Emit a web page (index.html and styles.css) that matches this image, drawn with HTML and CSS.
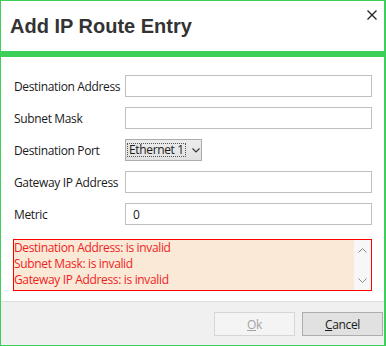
FILE: index.html
```html
<!DOCTYPE html>
<html lang="en">
<head>
    <meta charset="UTF-8">
    <meta name="viewport" content="width=device-width, initial-scale=1.0">
    <title>Add IP Route Entry</title>
    <link rel="stylesheet" href="styles.css">
</head>
<body>
  <div class="dialog">
      <div class="dialog-header">
          <h1>Add IP Route Entry</h1>
          <button class="close-btn" type="button" aria-label="Close">
              <svg width="10" height="10" viewBox="0 0 10 10">
                  <path d="M0.5 0.5 L9.5 9.5 M9.5 0.5 L0.5 9.5" stroke="#222" stroke-width="1.3" fill="none"/>
              </svg>
          </button>
      </div>
      <div class="accent-bar"></div>

      <form class="route-form" id="routeForm">
          <label for="destAddress">Destination Address</label>
          <input type="text" id="destAddress" class="field">

          <label for="subnetMask">Subnet Mask</label>
          <input type="text" id="subnetMask" class="field">

          <label>Destination Port</label>
          <div class="combo">
              <span class="combo-text">Ethernet 1</span>
              <svg class="combo-arrow" width="8" height="5" viewBox="0 0 8 5">
                  <path d="M0.5 0.5 L4 4 L7.5 0.5" stroke="#333" stroke-width="1.1" fill="none"/>
              </svg>
          </div>

          <label for="gatewayAddress">Gateway IP Address</label>
          <input type="text" id="gatewayAddress" class="field">

          <label for="metric">Metric</label>
          <input type="text" id="metric" class="field" value="0">
      </form>

      <!-- validation messages -->
      <div class="errors">
          <div class="error-list">
              <p>Destination Address: is invalid</p>
              <p>Subnet Mask: is invalid</p>
              <p>Gateway IP Address: is invalid</p>
          </div>
          <div class="scrollbar">
              <svg width="9" height="5" viewBox="0 0 9 5">
                  <path d="M0.5 4.5 L4.5 0.5 L8.5 4.5" stroke="#8a8a8a" stroke-width="1" fill="none"/>
              </svg>
              <svg width="9" height="5" viewBox="0 0 9 5">
                  <path d="M0.5 0.5 L4.5 4.5 L8.5 0.5" stroke="#8a8a8a" stroke-width="1" fill="none"/>
              </svg>
          </div>
      </div>

      <div class="dialog-footer">
          <button type="button" class="btn" disabled><u>O</u>k</button>
          <button type="button" class="btn"><u>C</u>ancel</button>
      </div>
  </div>
</body>
</html>
```

FILE: styles.css
```css
body {
    margin: 0;
    padding: 0;
    font-family: "Open Sans", "Noto Sans", sans-serif;
    font-size: 12px;
    letter-spacing: -0.35px;
    color: #1a1a1a;
    background-color: white;
}
.dialog {
    width: 386px;
    height: 346px;
    box-sizing: border-box;
    border: 1px solid #3ccf5a;
    border-right-width: 2px;
    display: flex;
    flex-direction: column;
    background-color: white;
}
.dialog-header {
    height: 50px;
    box-sizing: border-box;
    padding: 14px 0 0 9px;
    display: flex;
    justify-content: space-between;
    align-items: flex-start;
}
h1 {
    margin: 0;
    font-family: "Liberation Sans", Arial, sans-serif;
    font-size: 20px;
    font-weight: bold;
    line-height: 23px;
    letter-spacing: 0;
    color: #333;
}
.close-btn {
    margin: -5px 7px 0 0;
    padding: 0;
    border: none;
    background: none;
    width: 10px;
    height: 10px;
    display: flex;
}
.accent-bar {
    height: 6px;
    background-color: #3ccf5a;
}
.route-form {
    display: grid;
    grid-template-columns: 112px 1fr;
    grid-auto-rows: 22px;
    row-gap: 10px;
    align-items: center;
    padding: 18px 12px 0 12px;
}
label {
    padding-left: 1px;
    white-space: nowrap;
}
.field {
    height: 22px;
    box-sizing: border-box;
    border: 1px solid #bfbfbf;
    padding: 0 7px;
    font-family: inherit;
    font-size: 12px;
    color: #1a1a1a;
    outline: none;
}
.combo {
    width: 77px;
    height: 22px;
    box-sizing: border-box;
    border: 1px solid #acacac;
    background: linear-gradient(#ececec, #e2e2e2);
    display: flex;
    align-items: center;
    gap: 6px;
    padding-left: 1px;
    white-space: nowrap;
}
.combo-text {
    border: 1px dotted #555;
    line-height: 12px;
    padding: 0 1px;
}
.errors {
    margin: 14px 12px 0 12px;
    height: 52px;
    box-sizing: border-box;
    border: 1px solid #f00;
    background-color: #fae9d6;
    display: flex;
}
.error-list {
    flex: 1;
}
.errors p {
    margin: 0;
    color: #f01e1e;
    line-height: 16px;
}
.scrollbar {
    width: 17px;
    background-color: #f7f7f7;
    display: flex;
    flex-direction: column;
    justify-content: space-between;
    align-items: center;
    padding: 8px 0 7px 0;
    box-sizing: border-box;
}
.dialog-footer {
    margin-top: auto;
    height: 44px;
    box-sizing: border-box;
    border-top: 1px solid #dfdfdf;
    background-color: #f0f0f0;
    display: flex;
    justify-content: flex-end;
    align-items: flex-start;
    gap: 7px;
    padding: 10px 1px 0 0;
}
.btn {
    width: 81px;
    height: 24px;
    font-family: inherit;
    font-size: 12px;
    letter-spacing: -0.35px;
    color: #1a1a1a;
    background-color: #e1e1e1;
    border: 1px solid #adadad;
    padding: 0;
}
.btn:disabled {
    color: #a3a3a3;
    background-color: #f4f4f4;
    border-color: #d6d6d6;
}
```
